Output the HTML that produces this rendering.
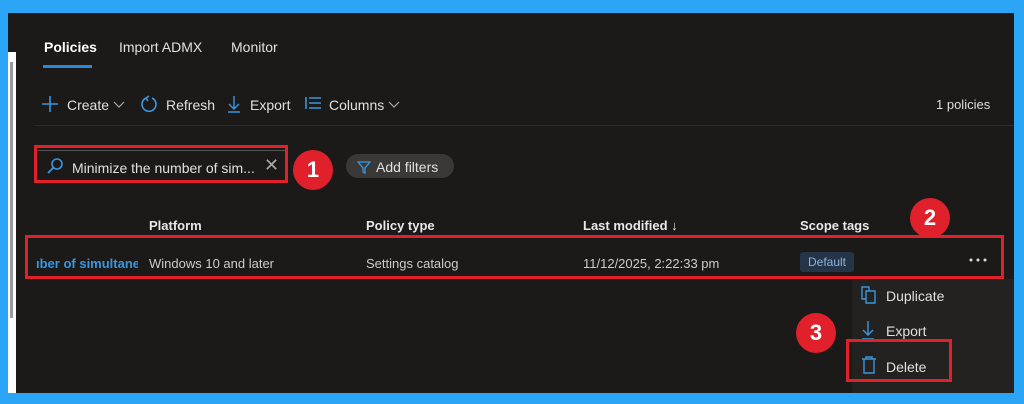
<!DOCTYPE html><html><head><style>
body{margin:0;width:1024px;height:404px;background:#2ba5f5;position:relative;overflow:hidden;font-family:"Liberation Sans",sans-serif;}
.p{position:absolute;left:8px;top:13px;width:1006px;height:380px;background:#1b1a19;}
.a{position:absolute;white-space:nowrap;}
.t{color:#e0e0e0;font-size:14px;}
.r{position:absolute;border:3px solid #e0202b;box-sizing:border-box;}
.c{position:absolute;width:40px;height:40px;border-radius:50%;background:#e0202b;color:#fff;font-weight:bold;font-size:22px;text-align:center;line-height:40px;}
.h{color:#e8e8e8;font-size:13px;font-weight:bold;}
</style></head><body>
<div class="p"></div>
<div class="a" style="left:8px;top:52px;width:8px;height:341px;background:#fff"></div>
<div class="a" style="left:10px;top:62px;width:3px;height:256px;background:#999"></div>
<div class="a t" style="left:44px;top:39px;font-weight:bold;color:#fff">Policies</div>
<div class="a" style="left:43px;top:65px;width:49px;height:3px;background:#2b88d8"></div>
<div class="a t" style="left:119px;top:39px">Import ADMX</div>
<div class="a t" style="left:231px;top:39px">Monitor</div>
<svg class="a" style="left:40px;top:94px" width="20" height="20"><path d="M10 2V18M2 10H18" stroke="#3a96dd" stroke-width="1.6"/></svg>
<div class="a t" style="left:67px;top:97px">Create</div>
<svg class="a" style="left:113px;top:99px" width="12" height="10"><path d="M1 3L6 8L11 3" stroke="#aaa" fill="none" stroke-width="1.2"/></svg>
<svg class="a" style="left:140px;top:95px" width="18" height="18"><path d="M6 3A7 7 0 1 0 12 3M6 3L9 1M6 3L8 6" stroke="#3a96dd" fill="none" stroke-width="1.6"/></svg>
<div class="a t" style="left:166px;top:97px">Refresh</div>
<svg class="a" style="left:227px;top:95px" width="14" height="18"><path d="M7 1V14M2 9L7 14L12 9M1 17H13" stroke="#3a96dd" fill="none" stroke-width="1.4"/></svg>
<div class="a t" style="left:250px;top:97px">Export</div>
<svg class="a" style="left:304px;top:96px" width="18" height="14"><path d="M2 1V13M5 2H17M5 7H17M5 12H17" stroke="#3a96dd" fill="none" stroke-width="1.6"/></svg>
<div class="a t" style="left:329px;top:97px">Columns</div>
<svg class="a" style="left:388px;top:99px" width="12" height="10"><path d="M1 3L6 8L11 3" stroke="#aaa" fill="none" stroke-width="1.2"/></svg>
<div class="a" style="left:936px;top:97px;color:#ddd;font-size:13px">1 policies</div>
<div class="a" style="left:35px;top:125px;width:979px;height:1px;background:#2c2b2a"></div>
<div class="a" style="left:38px;top:150px;width:247px;height:1px;background:#555"></div>
<div class="r" style="left:34px;top:145px;width:254px;height:38px"></div>
<svg class="a" style="left:46px;top:157px" width="18" height="18"><circle cx="11" cy="7" r="5" stroke="#3a96dd" fill="none" stroke-width="1.6"/><path d="M7.5 10.5L2 16" stroke="#3a96dd" stroke-width="1.8"/></svg>
<div class="a t" style="left:72px;top:160px">Minimize the number of sim...</div>
<div class="a" style="left:264px;top:155px;color:#aaa;font-size:18px">✕</div>
<div class="c" style="left:293px;top:150px">1</div>
<div class="a" style="left:346px;top:154px;width:108px;height:24px;border-radius:12px;background:#3a3938"></div>
<svg class="a" style="left:357px;top:160px" width="14" height="14"><path d="M1 2H13L8 8V13L6 12V8Z" stroke="#3a96dd" fill="none" stroke-width="1.3"/></svg>
<div class="a t" style="left:376px;top:159px">Add filters</div>
<div class="a h" style="left:149px;top:218px">Platform</div>
<div class="a h" style="left:366px;top:218px">Policy type</div>
<div class="a h" style="left:583px;top:218px">Last modified ↓</div>
<div class="a h" style="left:800px;top:218px">Scope tags</div>
<div class="c" style="left:910px;top:198px">2</div>
<div class="r" style="left:25px;top:235px;width:979px;height:44px"></div>
<div class="a" style="left:36px;top:256px;width:102px;overflow:hidden;color:#3a96dd;font-size:13px;font-weight:bold">ıber of simultaneous</div>
<div class="a" style="left:149px;top:256px;color:#ccc;font-size:13px">Windows 10 and later</div>
<div class="a" style="left:366px;top:256px;color:#ccc;font-size:13px">Settings catalog</div>
<div class="a" style="left:583px;top:256px;color:#ccc;font-size:13px">11/12/2025, 2:22:33 pm</div>
<div class="a" style="left:800px;top:252px;width:54px;height:20px;background:#253447;border-radius:3px;color:#8ab4dd;font-size:12px;text-align:center;line-height:20px">Default</div>
<svg class="a" style="left:968px;top:257px" width="20" height="6"><circle cx="3" cy="3" r="1.5" fill="#ddd"/><circle cx="10" cy="3" r="1.5" fill="#ddd"/><circle cx="17" cy="3" r="1.5" fill="#ddd"/></svg>
<div class="a" style="left:852px;top:279px;width:162px;height:114px;background:#232221"></div>
<svg class="a" style="left:860px;top:285px" width="18" height="20"><path d="M2 2H9V14H2Z" stroke="#3a96dd" fill="none" stroke-width="1.4"/><path d="M6 6H15V18H6Z" stroke="#3a96dd" fill="#232221" stroke-width="1.4"/></svg>
<div class="a t" style="left:886px;top:288px">Duplicate</div>
<svg class="a" style="left:861px;top:320px" width="14" height="20"><path d="M7 1V15M2 10L7 15L12 10M1 19H13" stroke="#3a96dd" fill="none" stroke-width="1.4"/></svg>
<div class="a t" style="left:886px;top:323px">Export</div>
<div class="c" style="left:796px;top:313px">3</div>
<div class="r" style="left:846px;top:339px;width:106px;height:43px"></div>
<svg class="a" style="left:861px;top:356px" width="16" height="18"><path d="M1 3H15M5 3V1H11V3M3 3V17H13V3" stroke="#3a96dd" fill="none" stroke-width="1.4"/></svg>
<div class="a t" style="left:886px;top:359px">Delete</div>
</body></html>
